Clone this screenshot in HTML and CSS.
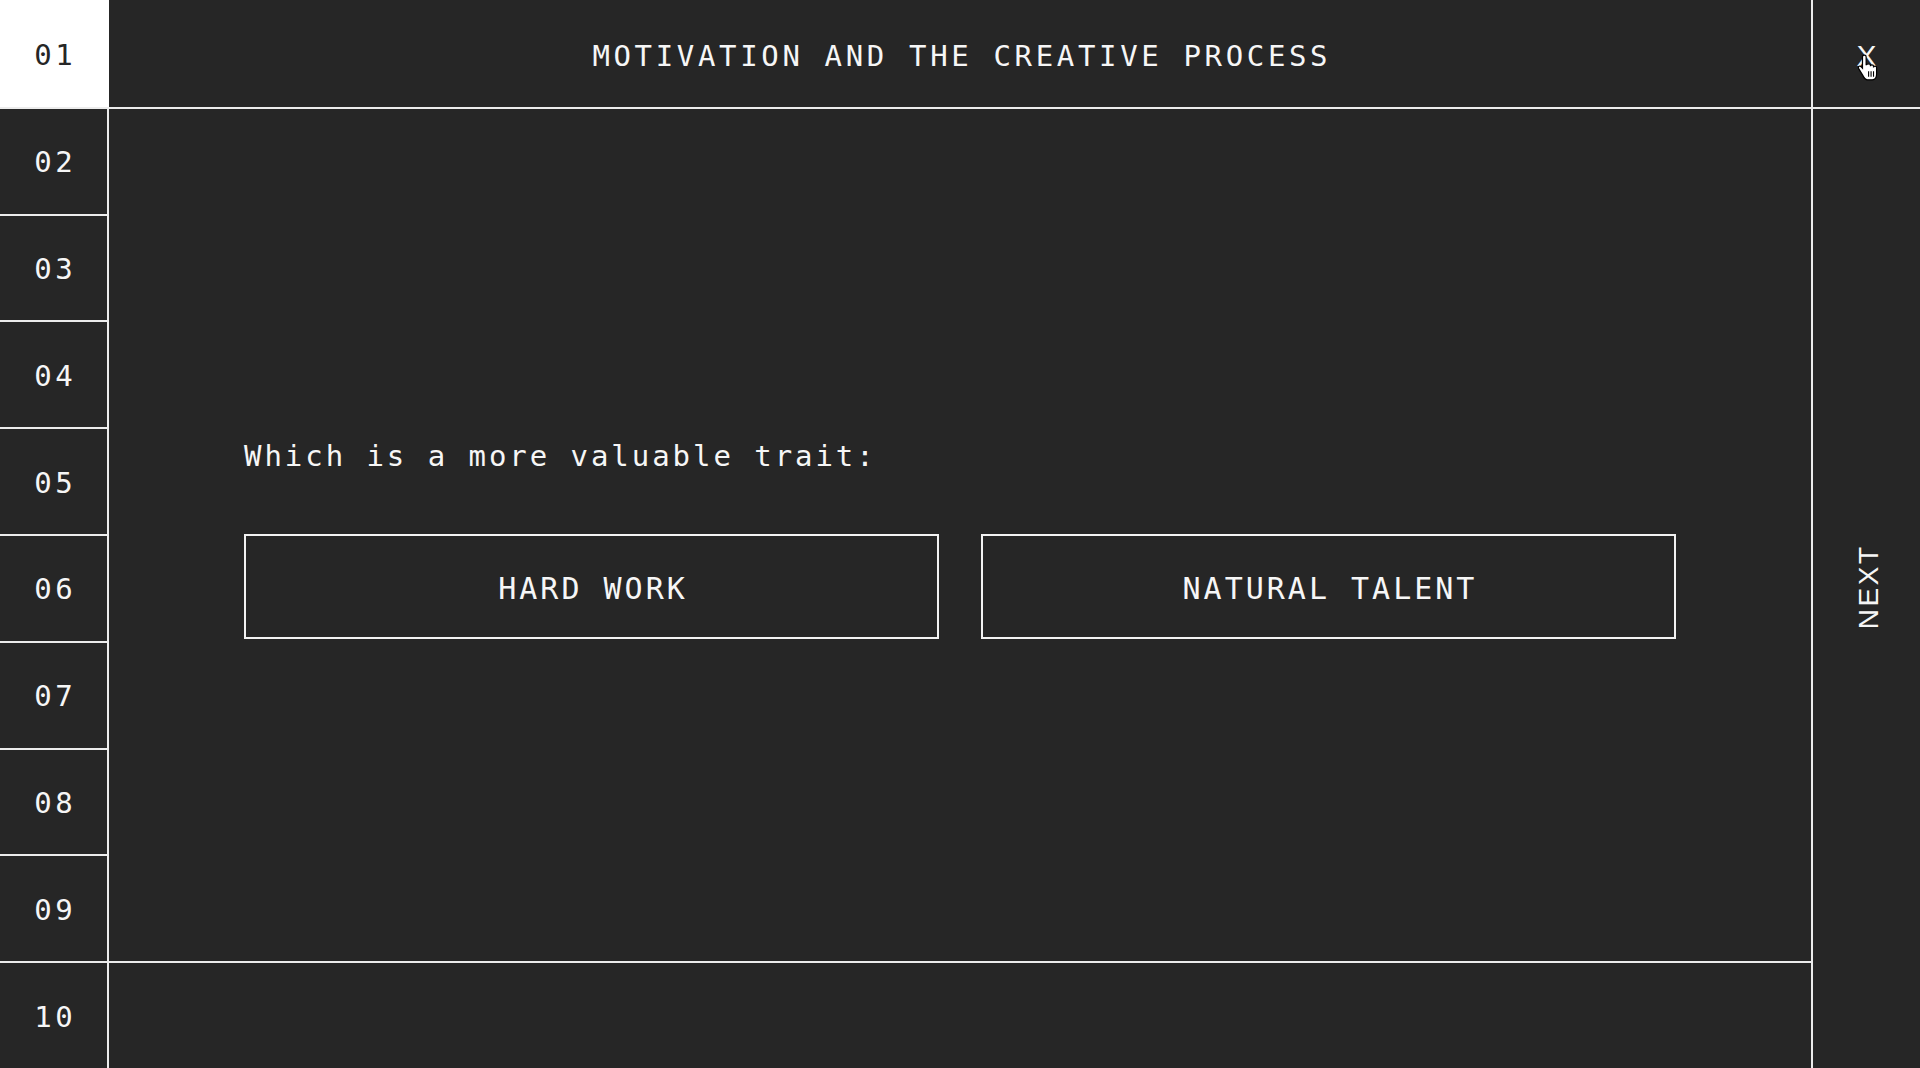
FILE: index.html
```html
<!DOCTYPE html>
<html lang="en">
<head>
<meta charset="utf-8">
<title>Motivation and the Creative Process</title>
<link rel="stylesheet" href="styles.css">
</head>
<body>
<div class="app">
  <nav class="nav">
    <div class="nav-item active">01</div>
    <div class="nav-item">02</div>
    <div class="nav-item">03</div>
    <div class="nav-item">04</div>
    <div class="nav-item">05</div>
    <div class="nav-item">06</div>
    <div class="nav-item">07</div>
    <div class="nav-item">08</div>
    <div class="nav-item">09</div>
    <div class="nav-item">10</div>
  </nav>
  <main class="main">
    <header class="title-bar"><h1 class="title">MOTIVATION AND THE CREATIVE PROCESS</h1></header>
    <section class="stage">
      <p class="question">Which is a more valuable trait:</p>
      <div class="choices">
        <button class="choice">HARD WORK</button>
        <button class="choice">NATURAL TALENT</button>
      </div>
    </section>
    <footer class="foot"></footer>
  </main>
  <aside class="side">
    <div class="close">X
      <svg class="cursor" width="22" height="27" viewBox="0 0 17 22">
        <path d="M5.5 1C4.7 1 4 1.7 4 2.5V11.5L3 10.4C2.3 9.6 1.2 9.6 0.8 10.3C0.5 10.9 0.6 11.5 1 12.1L4 17C5 19 6 21 8 21H12C14 21 15.5 19 15.5 16.5V11C15.5 10.3 14.9 9.8 14.2 9.8C13.6 9.8 13 10.3 13 11V10C13 9.3 12.4 8.8 11.7 8.8C11 8.8 10.5 9.3 10.5 10V9.2C10.5 8.5 9.9 8 9.2 8C8.5 8 7 8.5 7 9.2V2.5C7 1.7 6.3 1 5.5 1Z" fill="#fff" stroke="#000" stroke-width="1"/>
        <path d="M9 14V18.5M11 14V18.5M13 14V18.5" stroke="#000" stroke-width="0.9"/>
      </svg>
    </div>
    <div class="next"><span class="next-label">NEXT</span></div>
  </aside>
</div>
</body>
</html>
```

FILE: styles.css
```css
* { box-sizing: border-box; }

html, body {
  margin: 0;
  padding: 0;
  background: #262626;
}

body {
  color: #f6f6f6;
  font-family: "DejaVu Sans Mono", "Liberation Mono", monospace;
}

.app {
  display: grid;
  grid-template-columns: 109px 1fr 109px;
  height: 1068px;
  overflow: hidden;
}

/* left numbered nav */
.nav {
  display: grid;
  grid-template-rows: repeat(10, 1fr);
}

.nav-item {
  display: flex;
  align-items: center;
  justify-content: center;
  border-right: 2px solid #ececec;
  border-top: 2px solid #ececec;
  font-size: 29px;
  letter-spacing: 3.5px;
  padding: 2px 0 0 3.5px;
  color: #f6f6f6;
}

.nav-item.active {
  background: #ffffff;
  color: #262626;
  border-color: #ffffff;
  border-top: none;
  padding-top: 4px;
}

/* main */
.main {
  display: grid;
  grid-template-rows: repeat(10, 1fr);
  min-width: 0;
}

.title-bar {
  grid-row: 1;
  display: flex;
  align-items: center;
  justify-content: center;
  padding-top: 5px;
}

.title {
  margin: 0;
  font-weight: normal;
  font-size: 29px;
  letter-spacing: 3.65px;
  padding-left: 3.65px;
}

.stage {
  grid-row: 2 / 10;
  border-top: 2px solid #ececec;
  display: flex;
  flex-direction: column;
  justify-content: center;
  padding: 8px 135px 0;
}

.question {
  margin: 0 0 60px;
  font-size: 29px;
  line-height: 36px;
  letter-spacing: 2.95px;
}

.choices {
  display: grid;
  grid-template-columns: 1fr 1fr;
  gap: 42px;
}

.choice {
  height: 105px;
  background: transparent;
  border: 2px solid #f2f2f2;
  color: #f6f6f6;
  font-family: "DejaVu Sans Mono", "Liberation Mono", monospace;
  font-size: 30px;
  letter-spacing: 3px;
  padding: 3px 0 0 3px;
  cursor: pointer;
}

.foot {
  grid-row: 10;
  border-top: 2px solid #ececec;
}

/* right side */
.side {
  display: grid;
  grid-template-rows: repeat(10, 1fr);
  border-left: 2px solid #ececec;
}

.close {
  grid-row: 1;
  position: relative;
  display: flex;
  align-items: center;
  justify-content: center;
  padding-top: 5px;
  font-family: "Liberation Sans", Arial, sans-serif;
  font-size: 30px;
}

.cursor {
  position: absolute;
  left: 44px;
  top: 54px;
}

.next {
  grid-row: 2 / 11;
  border-top: 2px solid #ececec;
  display: flex;
  align-items: center;
  justify-content: center;
}

.next-label {
  writing-mode: vertical-rl;
  transform: rotate(180deg);
  font-family: "Liberation Sans", Arial, sans-serif;
  font-size: 28px;
  letter-spacing: 2.5px;
  padding-top: 2.5px;
  margin-left: 4px;
}
```
